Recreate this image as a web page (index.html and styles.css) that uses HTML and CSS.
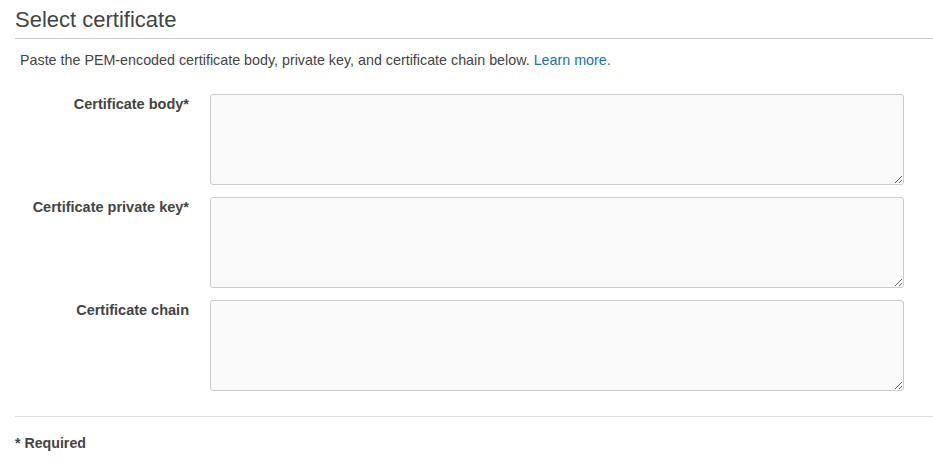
FILE: index.html
```html
<!DOCTYPE html>
<html>
<head>
<meta charset="utf-8">
<link rel="stylesheet" href="styles.css">
</head>
<body>
<div class="page">
  <h2 class="title">Select certificate</h2>
  <p class="desc">Paste the PEM-encoded certificate body, private key, and certificate chain below. <a href="#" class="link">Learn more.</a></p>
  <div class="form">
    <div class="row">
      <label class="label">Certificate body*</label>
      <textarea class="field"></textarea>
    </div>
    <div class="row">
      <label class="label">Certificate private key*</label>
      <textarea class="field"></textarea>
    </div>
    <div class="row">
      <label class="label">Certificate chain</label>
      <textarea class="field"></textarea>
    </div>
  </div>
  <div class="footer">* Required</div>
</div>
</body>
</html>
```
FILE: styles.css
```css
html, body {
  margin: 0;
  padding: 0;
  background: #fff;
}
body {
  font-family: "Liberation Sans", Arial, sans-serif;
  color: #444;
}
.page {
  padding: 0 0 0 15px;
}
.title {
  margin: 0;
  padding-top: 7px;
  font-size: 22px;
  font-weight: normal;
  line-height: 26px;
  color: #444;
  padding-bottom: 5px;
  border-bottom: 1px solid #ccc;
}
.desc {
  margin: 11px 0 0 5px;
  font-size: 14.3px;
  line-height: 20px;
  color: #444;
}
.link {
  color: #1a6ec1;
  text-decoration: none;
}
.form {
  display: flex;
  flex-direction: column;
  gap: 12px;
  margin-top: 24px;
  padding-bottom: 25px;
  border-bottom: 1px solid #ddd;
}
.row {
  display: flex;
  align-items: flex-start;
}
.label {
  width: 174px;
  margin-right: 21px;
  text-align: right;
  font-size: 14.5px;
  font-weight: bold;
  line-height: 20px;
  color: #444;
}
.field {
  width: 694px;
  height: 91px;
  box-sizing: border-box;
  border: 1px solid #ccc;
  border-radius: 3px;
  background: #fafafa;
  padding: 6px;
  font-family: "Liberation Sans", Arial, sans-serif;
  font-size: 13px;
}
.footer {
  margin-top: 16px;
  font-size: 14.2px;
  font-weight: bold;
  line-height: 20px;
  color: #444;
}
```
